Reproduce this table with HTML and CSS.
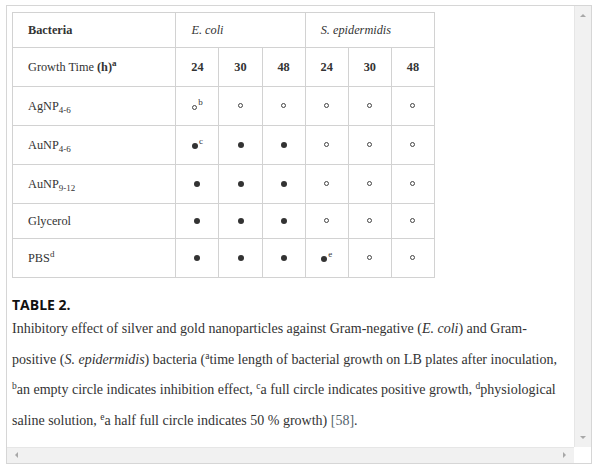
FILE: index.html
```html
<!DOCTYPE html>
<html>
<head>
<meta charset="utf-8">
<link rel="stylesheet" href="styles.css">
</head>
<body>
<div class="frame">
  <div class="viewport">
    <table class="data">
      <colgroup>
        <col class="c-name"><col class="c-num"><col class="c-num"><col class="c-num"><col class="c-num"><col class="c-num"><col class="c-num">
      </colgroup>
      <tr class="r-short">
        <td class="name"><b>Bacteria</b></td>
        <td colspan="3"><i>E. coli</i></td>
        <td colspan="3"><i>S. epidermidis</i></td>
      </tr>
      <tr class="r-tall">
        <td class="name">Growth Time <b>(h)</b><sup class="sup-b">a</sup></td>
        <td class="num"><b>24</b></td><td class="num"><b>30</b></td><td class="num"><b>48</b></td>
        <td class="num"><b>24</b></td><td class="num"><b>30</b></td><td class="num"><b>48</b></td>
      </tr>
      <tr class="r-tall">
        <td class="name">AgNP<sub>4-6</sub></td>
        <td class="num"><span class="dot open low"></span><sup>b</sup></td>
        <td class="num"><span class="dot open"></span></td>
        <td class="num"><span class="dot open"></span></td>
        <td class="num"><span class="dot open"></span></td>
        <td class="num"><span class="dot open"></span></td>
        <td class="num"><span class="dot open"></span></td>
      </tr>
      <tr class="r-tall">
        <td class="name">AuNP<sub>4-6</sub></td>
        <td class="num"><span class="dot full low"></span><sup>c</sup></td>
        <td class="num"><span class="dot full"></span></td>
        <td class="num"><span class="dot full"></span></td>
        <td class="num"><span class="dot open"></span></td>
        <td class="num"><span class="dot open"></span></td>
        <td class="num"><span class="dot open"></span></td>
      </tr>
      <tr class="r-tall">
        <td class="name">AuNP<sub>9-12</sub></td>
        <td class="num"><span class="dot full"></span></td>
        <td class="num"><span class="dot full"></span></td>
        <td class="num"><span class="dot full"></span></td>
        <td class="num"><span class="dot open"></span></td>
        <td class="num"><span class="dot open"></span></td>
        <td class="num"><span class="dot open"></span></td>
      </tr>
      <tr class="r-short">
        <td class="name">Glycerol</td>
        <td class="num"><span class="dot full"></span></td>
        <td class="num"><span class="dot full"></span></td>
        <td class="num"><span class="dot full"></span></td>
        <td class="num"><span class="dot open"></span></td>
        <td class="num"><span class="dot open"></span></td>
        <td class="num"><span class="dot open"></span></td>
      </tr>
      <tr class="r-tall">
        <td class="name">PBS<sup>d</sup></td>
        <td class="num"><span class="dot full"></span></td>
        <td class="num"><span class="dot full"></span></td>
        <td class="num"><span class="dot full"></span></td>
        <td class="num"><span class="dot full low"></span><sup>e</sup></td>
        <td class="num"><span class="dot open"></span></td>
        <td class="num"><span class="dot open"></span></td>
      </tr>
    </table>
    <div class="label">TABLE 2.</div>
    <p class="caption">Inhibitory effect of silver and gold nanoparticles against Gram-negative (<i>E. coli</i>) and Gram-positive (<i>S. epidermidis</i>) bacteria (<sup>a</sup>time length of bacterial growth on LB plates after inoculation, <sup>b</sup>an empty circle indicates inhibition effect, <sup>c</sup>a full circle indicates positive growth, <sup>d</sup>physiological saline solution, <sup>e</sup>a half full circle indicates 50 % growth) <span class="ref">[58]</span>.</p>
  </div>
  <div class="vscroll">
    <span class="arrow up"></span>
    <span class="arrow down"></span>
  </div>
  <div class="hscroll">
    <span class="arrow left"></span>
    <span class="arrow right"></span>
  </div>
  <div class="corner"></div>
</div>
</body>
</html>
```

FILE: styles.css
```css
html, body {
  margin: 0;
  padding: 0;
  background: #ffffff;
}

body {
  padding: 5px 0 0 6px;
  font-family: "Liberation Serif", "Times New Roman", serif;
  color: #333333;
}

.frame {
  width: 584px;
  height: 457px;
  border: 1px solid #d6d6d6;
  display: grid;
  grid-template-columns: 567px 17px;
  grid-template-rows: 441px 16px;
  overflow: hidden;
}

.viewport {
  grid-column: 1;
  grid-row: 1;
  padding: 6px 12px 0 5px;
  overflow: hidden;
}

.data {
  border-collapse: collapse;
  table-layout: fixed;
  width: 423px;
  font-size: 12.3px;
  border: 1px solid #d2d2d2;
}

.c-name { width: 163px; }
.c-num { width: 43px; }

.data td {
  border: 1px solid #d2d2d2;
  padding: 0 0 0 15px;
  vertical-align: middle;
  line-height: 15px;
  white-space: nowrap;
}

.data td.num {
  padding: 0;
  text-align: center;
}

.r-short td { height: 34px; }
.r-tall td { height: 38px; }

.data sup, .data sub {
  font-size: 9px;
  line-height: 0;
}

.data sup { vertical-align: 5px; }
.data sub { vertical-align: -3px; }
.data sup.sup-b { font-weight: bold; }

.dot {
  display: inline-block;
  box-sizing: border-box;
  width: 5px;
  height: 5px;
  border-radius: 50%;
  vertical-align: middle;
  position: relative;
  top: -1px;
}

.dot.open {
  border: 1px solid #444444;
}

.dot.full {
  width: 6px;
  height: 6px;
  background: #333333;
}

.dot.low {
  vertical-align: baseline;
  top: 0;
  margin-right: 1px;
}

.label {
  margin-top: 17px;
  font-family: "Open Sans", "Liberation Sans", sans-serif;
  font-weight: 700;
  font-size: 14px;
  line-height: 19px;
  color: #111111;
}

.caption {
  margin: 0;
  font-size: 14px;
  line-height: 30.7px;
  color: #333333;
}

.caption sup {
  font-size: 9.5px;
  line-height: 0;
  vertical-align: 5px;
}

.ref {
  color: #55646e;
}

.vscroll {
  grid-column: 2;
  grid-row: 1;
  background: #f1f1f1;
  border-left: 1px solid #e6e6e6;
  position: relative;
}

.hscroll {
  grid-column: 1;
  grid-row: 2;
  background: #f1f1f1;
  border-top: 1px solid #e6e6e6;
  position: relative;
}

.corner {
  grid-column: 2;
  grid-row: 2;
  background: #ffffff;
}

.arrow {
  position: absolute;
  width: 0;
  height: 0;
  border: 3px solid transparent;
}

.arrow.up {
  left: 5px;
  top: 5px;
  border-bottom: 3px solid #a8a8a8;
  border-left-width: 3.5px;
  border-right-width: 3.5px;
}

.arrow.down {
  left: 5px;
  bottom: 5px;
  border-top: 3px solid #a8a8a8;
  border-left-width: 3.5px;
  border-right-width: 3.5px;
}

.arrow.left {
  left: 5px;
  top: 4px;
  border-right: 3px solid #a8a8a8;
  border-top-width: 3.5px;
  border-bottom-width: 3.5px;
}

.arrow.right {
  right: 5px;
  top: 4px;
  border-left: 3px solid #a8a8a8;
  border-top-width: 3.5px;
  border-bottom-width: 3.5px;
}
```
